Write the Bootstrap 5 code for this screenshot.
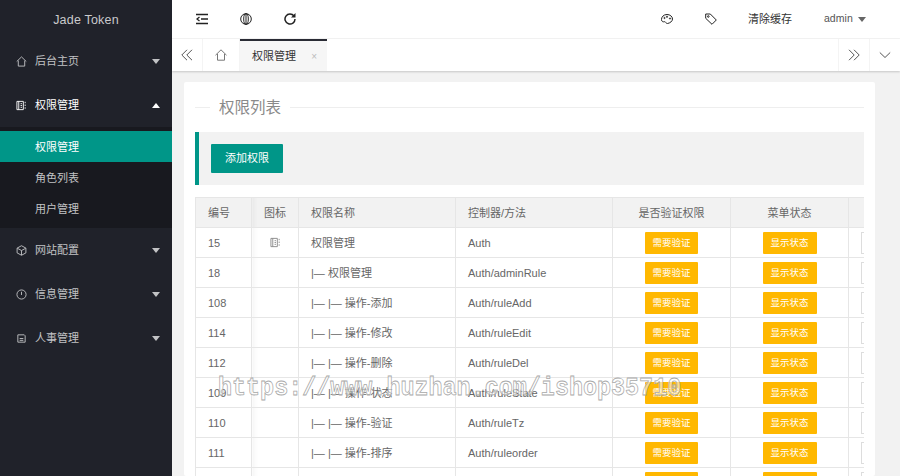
<!DOCTYPE html>
<html lang="zh"><head><meta charset="utf-8"><title>Jade Token</title>
<link href="https://cdn.jsdelivr.net/npm/bootstrap@5.3.0/dist/css/bootstrap.min.css" rel="stylesheet">
<style>
html,body{height:100%;overflow:hidden}
body{font-family:"Liberation Sans","Noto Sans CJK SC",sans-serif;font-size:11px;color:#666;background:#f2f2f2;position:relative}
.shell{height:476px}
.side{width:172px;flex:none;background:#20222a;color:#c2c3c5}
.brand{height:39px;color:#c9cacc;font-size:12.5px;letter-spacing:.2px;padding-top:1px}
.side-item{height:44px;padding:0 12px 0 16px;gap:8px}
.side-item svg{width:11px;height:11px;flex:none}
.side-item.open{color:#fff}
.tri{width:0;height:0;border:4px solid transparent;border-top:5px solid #c2c3c5;border-bottom:0}
.open .tri{border-top:0;border-bottom:5px solid #fff}
.sub{background:#18191f;padding:4px 0;height:101px}
.sub-item{height:31px;padding:1px 0 0 35px;color:#c2c3c5}
.sub-item.on{background:#009688;color:#fff}
.content{min-width:0}
.head{height:39px;background:#fff;border-bottom:1px solid #f4f4f4;flex:none;padding:0 34px 0 24px}
.head svg{width:12px;height:12px;color:#222}
.hbtn{width:44px}
.hleft{gap:0}
.hright{gap:32px;color:#333}
.cachelink{margin-left:-1px}
.adm{font-size:10.5px;letter-spacing:.1px;color:#555;gap:5px}
.adm .tri{border-top-color:#666;border-left-width:4.5px;border-right-width:4.5px}
.tabs{height:32px;background:#fff;box-shadow:0 1px 2px rgba(0,0,0,.18);flex:none;position:relative;z-index:1}
.tbtn{width:31px;border-right:1px solid #f4f4f4;color:#555}
.tbtn svg{width:12px;height:12px}
.tbtn.home{width:37px;color:#777}
.tab-on{width:87px;background:#f6f6f6;border-top:2px solid #292b34;color:#333;padding:0 10px 0 12px}
.tab-x{color:#bbb;font-size:10px}
.tgap{flex:1}
.tbtn.rt{border-right:0;border-left:1px solid #f4f4f4}
.page{padding:11px 25px 0 12px;flex:1;min-height:0}
.panel{background:#fff;border-radius:2px;padding:11px;height:100%;overflow:hidden}
.legendline{height:28px;gap:9px;color:#8a8a8a;font-size:15.5px;margin-bottom:11px;line-height:1}
.legendline span{padding-top:1px}
.legendline i{height:1px;background:#eee;display:block}
.rule-a{width:15px;flex:none}
.rule-b{flex:1}
.quote{height:53px;background:#f2f2f2;border-left:4px solid #009688;padding-left:12px;margin-bottom:12px}
.addb{width:72px;height:29px;background:#009688;color:#fff;font-size:11px;border:0;border-radius:1px;padding:0}
.gridwrap{overflow:hidden}
.perm{table-layout:fixed;width:790px;margin:0;border-collapse:collapse;font-size:11px;color:#666}
.perm th,.perm td{height:30px;padding:1px 12px 0;border:1px solid #e6e6e6;vertical-align:middle;font-weight:400;white-space:nowrap;background:#fff;color:#666;box-shadow:none}
.perm th{background:#f2f2f2}
.perm th.cen{padding:1px 0 0}
.perm td.cen{text-align:center;padding:0}
.perm th.cen{text-align:center}
.perm .fx{background-image:linear-gradient(90deg,rgba(0,0,0,.035),rgba(0,0,0,0) 5px)}
.tag{display:inline-block;height:22px;line-height:22px;background:#ffb800;color:#fff;font-size:9.5px;border-radius:1px;vertical-align:middle;text-align:center}
.tag.need{width:53px}
.tag.show{width:54px}
.opb{display:inline-block;width:40px;height:22px;border:1px solid #ddd;vertical-align:middle}
.perm td svg{width:11px;height:11px;color:#888;display:block;margin:auto}
.wm{position:absolute;left:218px;top:374px;font-family:"Liberation Mono",monospace;font-weight:700;font-size:23.4px;line-height:30px;color:rgba(255,255,255,.55);-webkit-text-stroke:.7px #a8a8a8;white-space:nowrap;pointer-events:none;z-index:5;opacity:.99;transform:scaleY(1.08)}
</style></head>
<body>
<div class="shell d-flex">
<nav class="side">
<div class="brand d-flex align-items-center justify-content-center">Jade Token</div>
<div class="side-item d-flex align-items-center"><svg viewBox="0 0 12 12" fill="none" stroke="currentColor"><path d="M.8 6 6 1l5.200 5M2.500 5v6h7V5"/></svg><span class="flex-grow-1">后台主页</span><span class="tri"></span></div>
<div class="side-item open d-flex align-items-center"><svg viewBox="0 0 12 12" fill="none" stroke="currentColor"><path d="M1 1.500h7v9H1zM3 1.500v9M5 4h1.500M5 6h1.500M5 8h1.500M10 2v1.500M10 5v1.500M10 8v1.500"/></svg><span class="flex-grow-1">权限管理</span><span class="tri"></span></div>
<div class="sub">
<div class="sub-item on d-flex align-items-center">权限管理</div>
<div class="sub-item d-flex align-items-center">角色列表</div>
<div class="sub-item d-flex align-items-center">用户管理</div>
</div>
<div class="side-item d-flex align-items-center"><svg viewBox="0 0 12 12" fill="none" stroke="currentColor"><path d="M6 .8 10.800 3.400v5.200L6 11.200 1.200 8.600V3.400zM1.500 3.600 6 6l4.500-2.400M6 6v5"/></svg><span class="flex-grow-1">网站配置</span><span class="tri"></span></div>
<div class="side-item d-flex align-items-center"><svg viewBox="0 0 12 12" fill="none" stroke="currentColor"><circle cx="6" cy="6" r="5"/><path d="M6 3v3.500"/></svg><span class="flex-grow-1">信息管理</span><span class="tri"></span></div>
<div class="side-item d-flex align-items-center"><svg viewBox="0 0 12 12" fill="none" stroke="currentColor"><path d="M2 2h7l1 1v7H2zM4 6h4M4 8h4"/></svg><span class="flex-grow-1">人事管理</span><span class="tri"></span></div>
</nav>
<main class="content flex-grow-1 d-flex flex-column">
<header class="head d-flex align-items-center justify-content-between">
<div class="hleft d-flex">
<span class="hbtn d-flex"><svg viewBox="0 0 12 12" fill="none" stroke="currentColor" stroke-width="1.300"><path d="M0 1.500h12M5 6h7M0 10.500h12M3.500 4 1 6l2.500 2"/></svg></span>
<span class="hbtn d-flex"><svg viewBox="0 0 12 12" fill="none" stroke="currentColor"><circle cx="6" cy="6" r="5.300"/><ellipse cx="6" cy="6" rx="2.300" ry="5.300"/><path d="M6 .7v10.600"/></svg></span>
<span class="hbtn d-flex"><svg viewBox="0 0 12 12" fill="none" stroke="currentColor" stroke-width="1.500"><path d="M10 3a5 5 0 1 0 1 3"/><path d="M11.500 0v4.500h-4.500" fill="currentColor" stroke="none"/></svg></span>
</div>
<div class="hright d-flex align-items-center">
<svg viewBox="0 0 12 12" fill="none" stroke="currentColor"><path d="M6 1.500C2.500 1.500.5 4 .5 6.500c0 2.500 2 2.500 3 2.200 1-.3 1.500 2 3 1.800 2.500-.4 5-2.200 5-4.500 0-2.500-2.500-4.500-5.500-4.500z"/><circle cx="3.500" cy="5" r=".6"/><circle cx="6" cy="3.800" r=".6"/><circle cx="9" cy="5.500" r=".6"/></svg>
<svg viewBox="0 0 12 12" fill="none" stroke="currentColor"><path d="M.7 1h4.600l6 6-4.300 4.300-6.300-6z"/><circle cx="3.300" cy="3.500" r=".8"/></svg>
<span class="cachelink text-nowrap">清除缓存</span>
<span class="adm d-flex align-items-center">admin<span class="tri"></span></span>
</div>
</header>
<div class="tabs d-flex">
<span class="tbtn d-flex align-items-center justify-content-center"><svg viewBox="0 0 12 12" fill="none" stroke="currentColor"><path d="M6 .8.8 6 6 11.200M11 .8 5.800 6l5.200 5.200"/></svg></span>
<span class="tbtn home d-flex align-items-center justify-content-center"><svg viewBox="0 0 12 12" fill="none" stroke="currentColor"><path d="M.5 6.200 6 .8l5.500 5.400M2.500 5v6.200h7V5"/></svg></span>
<span class="tab-on d-flex align-items-center justify-content-between"><span>权限管理</span><span class="tab-x">×</span></span>
<span class="tgap"></span>
<span class="tbtn rt d-flex align-items-center justify-content-center"><svg viewBox="0 0 12 12" fill="none" stroke="currentColor"><path d="M1 .8 6.200 6 1 11.200M6 .8 11.200 6 6 11.200"/></svg></span>
<span class="tbtn rt d-flex align-items-center justify-content-center"><svg viewBox="0 0 12 12" fill="none" stroke="currentColor"><path d="M.8 3.500 6 8.500l5.200-5"/></svg></span>
</div>
<div class="page">
<section class="panel">
<div class="legendline d-flex align-items-center"><i class="rule-a"></i><span>权限列表</span><i class="rule-b"></i></div>
<div class="quote d-flex align-items-center"><button class="addb" type="button">添加权限</button></div>
<div class="gridwrap">
<table class="perm">
<colgroup><col style="width:56px"><col style="width:47px"><col style="width:157px"><col style="width:157px"><col style="width:118px"><col style="width:118px"><col style="width:137px"></colgroup>
<thead><tr><th>编号</th><th class="cen fx">图标</th><th>权限名称</th><th>控制器/方法</th><th class="cen">是否验证权限</th><th class="cen">菜单状态</th><th class="cen"></th></tr></thead>
<tbody>
<tr><td>15</td><td class="cen fx"><svg viewBox="0 0 12 12" fill="none" stroke="currentColor"><path d="M1 1.500h7v9H1zM3 1.500v9M5 4h1.500M5 6h1.500M5 8h1.500M10 2v1.500M10 5v1.500M10 8v1.500"/></svg></td><td>权限管理</td><td>Auth</td><td class="cen"><span class="tag need">需要验证</span></td><td class="cen"><span class="tag show">显示状态</span></td><td><span class="opb"></span></td></tr>
<tr><td>18</td><td class="fx"></td><td>|— 权限管理</td><td>Auth/adminRule</td><td class="cen"><span class="tag need">需要验证</span></td><td class="cen"><span class="tag show">显示状态</span></td><td><span class="opb"></span></td></tr>
<tr><td>108</td><td class="fx"></td><td>|— |— 操作-添加</td><td>Auth/ruleAdd</td><td class="cen"><span class="tag need">需要验证</span></td><td class="cen"><span class="tag show">显示状态</span></td><td><span class="opb"></span></td></tr>
<tr><td>114</td><td class="fx"></td><td>|— |— 操作-修改</td><td>Auth/ruleEdit</td><td class="cen"><span class="tag need">需要验证</span></td><td class="cen"><span class="tag show">显示状态</span></td><td><span class="opb"></span></td></tr>
<tr><td>112</td><td class="fx"></td><td>|— |— 操作-删除</td><td>Auth/ruleDel</td><td class="cen"><span class="tag need">需要验证</span></td><td class="cen"><span class="tag show">显示状态</span></td><td><span class="opb"></span></td></tr>
<tr><td>109</td><td class="fx"></td><td>|— |— 操作-状态</td><td>Auth/ruleState</td><td class="cen"><span class="tag need">需要验证</span></td><td class="cen"><span class="tag show">显示状态</span></td><td><span class="opb"></span></td></tr>
<tr><td>110</td><td class="fx"></td><td>|— |— 操作-验证</td><td>Auth/ruleTz</td><td class="cen"><span class="tag need">需要验证</span></td><td class="cen"><span class="tag show">显示状态</span></td><td><span class="opb"></span></td></tr>
<tr><td>111</td><td class="fx"></td><td>|— |— 操作-排序</td><td>Auth/ruleorder</td><td class="cen"><span class="tag need">需要验证</span></td><td class="cen"><span class="tag show">显示状态</span></td><td><span class="opb"></span></td></tr>
<tr><td></td><td class="fx"></td><td></td><td></td><td class="cen"><span class="tag need">需要验证</span></td><td class="cen"><span class="tag show">显示状态</span></td><td><span class="opb"></span></td></tr>
</tbody></table>
</div>
</section>
</div>
</main>
</div>
<div class="wm">https://www.huzhan.com/ishop35710</div>
<script src="https://cdn.jsdelivr.net/npm/bootstrap@5.3.0/dist/js/bootstrap.bundle.min.js"></script>
</body></html>
